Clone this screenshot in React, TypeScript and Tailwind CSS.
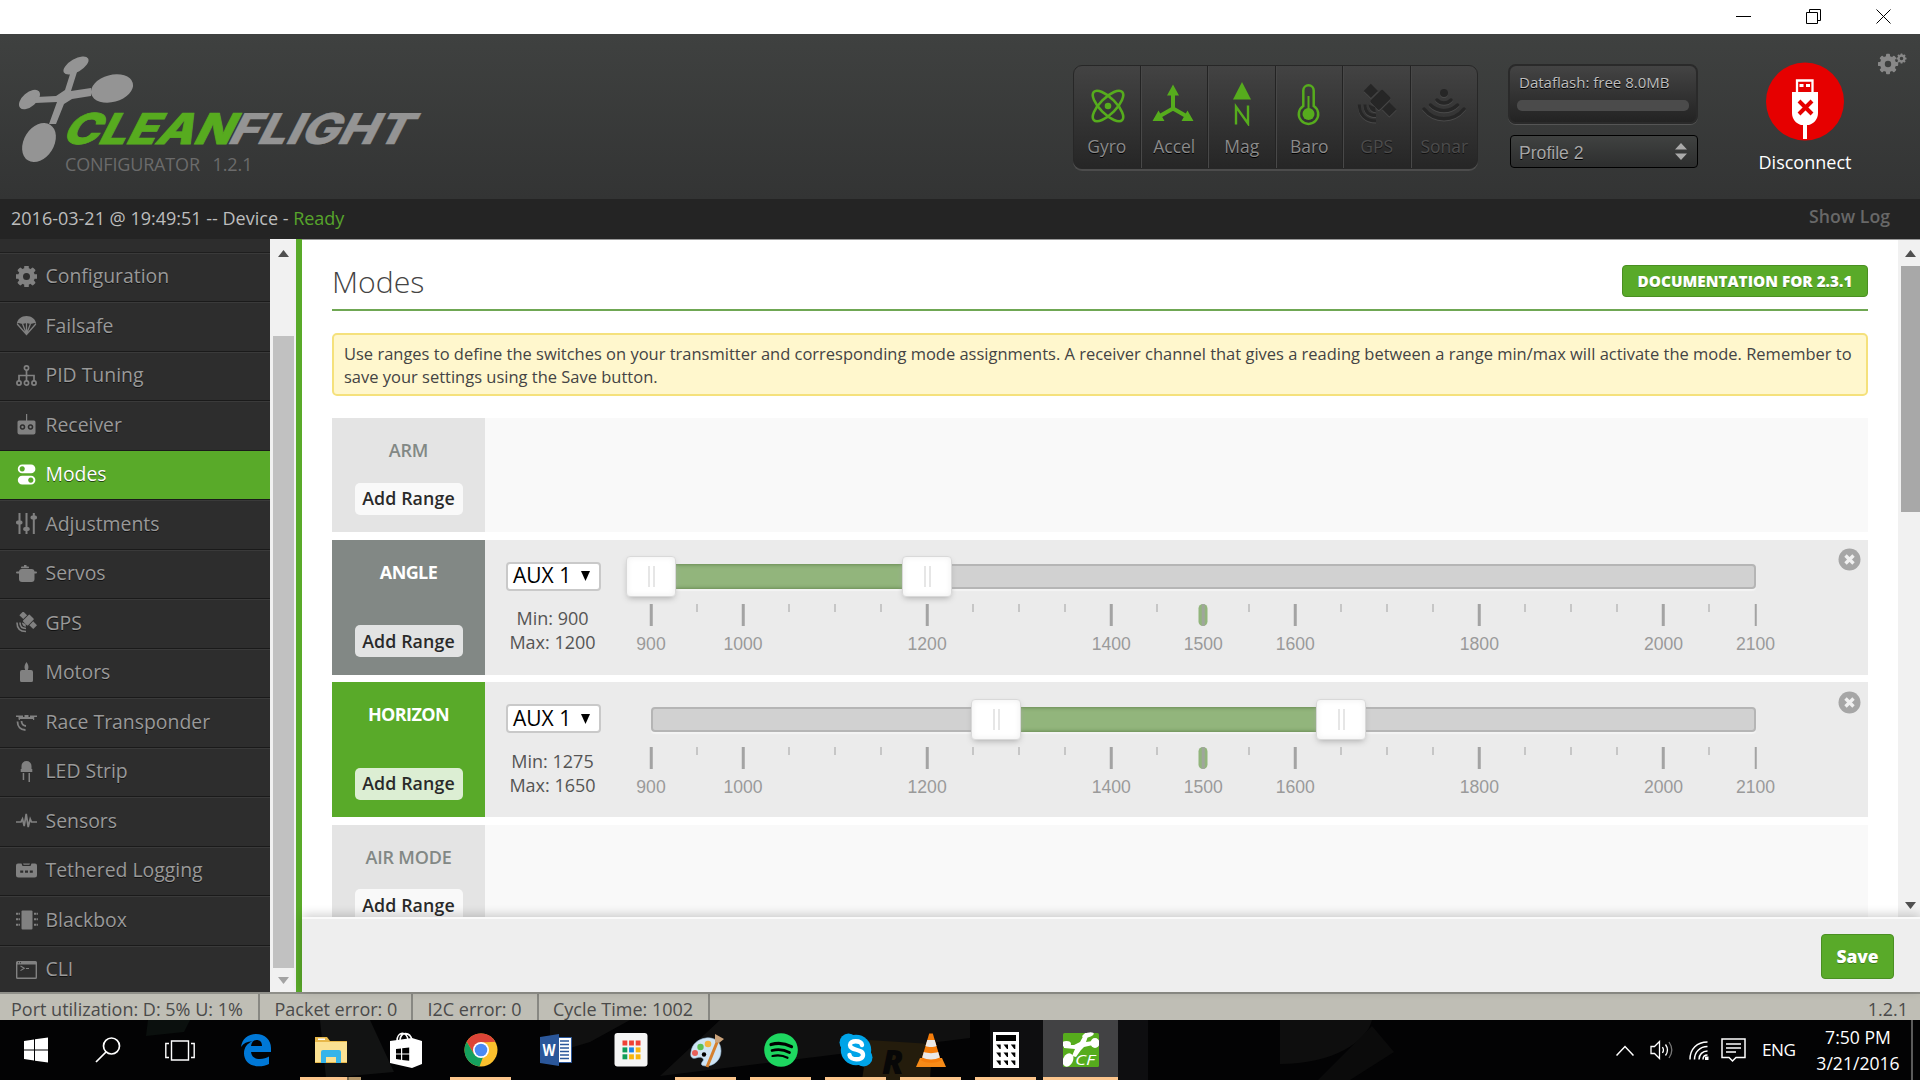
import type { ReactNode } from 'react';
import clsx from 'clsx';

type IconProps = { className?: string };

const Svg = ({ size = 21, className, children }: { size?: number; className?: string; children: ReactNode }) => (
  <svg width={size} height={size} viewBox={`0 0 ${size} ${size}`} className={clsx('shrink-0', className)} fill="currentColor">
    {children}
  </svg>
);

// thick ring with eight teeth rotated around it
const Gear = ({ cx, cy, r, hole, tooth }: { cx: number; cy: number; r: number; hole: number; tooth: number }) => (
  <>
    <circle cx={cx} cy={cy} r={(r + hole) / 2} fill="none" stroke="currentColor" strokeWidth={r - hole} />
    {[0, 45, 90, 135, 180, 225, 270, 315].map(a => (
      <rect key={a} x={cx - tooth / 2} y={cy - r - tooth * 0.55} width={tooth} height={tooth} rx={tooth * 0.25} transform={`rotate(${a} ${cx} ${cy})`} />
    ))}
  </>
);

function Satellite() {
  return (
    <g>
      <g transform="rotate(45 12 8)">
        <rect x="2.5" y="5.3" width="5.5" height="5.4" />
        <rect x="8.8" y="3" width="7" height="9.5" rx="1" />
        <rect x="16.6" y="5.3" width="5.5" height="5.4" />
      </g>
      <path d="M6 10.5a4 4 0 0 0 4 4.200l-.5-2.700Z" />
      <path d="M4 10.5c0 4 2 6 6 6M1 10.5c0 5.5 3.200 9 9 9" fill="none" stroke="currentColor" strokeWidth="1.6" />
    </g>
  );
}

const menu: { label: string; icon: ReactNode }[] = [
  { label: 'Configuration', icon: <Svg><Gear cx={10.5} cy={10.5} r={8.4} hole={3.5} tooth={4.6} /></Svg> },
  {
    label: 'Failsafe',
    icon: (
      <Svg>
        <path d="M.8 9C1.300 4 5.500 1 10.500 1S19.700 4 20.200 9L18.500 8 14.500 9 10.500 8 6.500 9 2.500 8Z" />
        <path d="M1.200 9 10.500 19.500 19.800 9M6.600 9l3.900 10L14.400 9M10.500 8v11" fill="none" stroke="currentColor" strokeWidth="1.3" />
      </Svg>
    ),
  },
  {
    label: 'PID Tuning',
    icon: (
      <Svg>
        <g fill="none" stroke="currentColor" strokeWidth="1.7">
          <circle cx="10.5" cy="3" r="2.1" />
          <circle cx="3" cy="18" r="2.1" />
          <circle cx="10.5" cy="18" r="2.1" />
          <circle cx="18" cy="18" r="2.1" />
          <path d="M10.5 5v11M3 16v-5.500h15V16" />
        </g>
      </Svg>
    ),
  },
  {
    label: 'Receiver',
    icon: (
      <Svg>
        <path fillRule="evenodd" d="M10 0h1.200v6.500h6.800a1.500 1.500 0 0 1 1.500 1.500v10.500a2 2 0 0 1-2 2h-14a2 2 0 0 1-2-2V8A1.500 1.500 0 0 1 3 6.500h7ZM6.500 10.200a2.800 2.800 0 1 0 .01 0ZM14.500 10.200a2.800 2.800 0 1 0 .01 0Z" />
        <circle cx="6.5" cy="13" r="1.2" />
        <circle cx="14.5" cy="13" r="1.2" />
      </Svg>
    ),
  },
  {
    label: 'Modes',
    icon: (
      <Svg>
        <path fillRule="evenodd" d="M6.200.5h8.800a4.300 4.300 0 0 1 0 8.800H6.200a4.300 4.300 0 0 1 0-8.800ZM6.200 2.300a2.600 2.600 0 1 0 .01 0Z" />
        <path fillRule="evenodd" d="M6.200 11.700h8.800a4.300 4.300 0 0 1 0 8.800H6.200a4.300 4.300 0 0 1 0-8.800ZM14.800 13.500a2.600 2.600 0 1 0 .01 0Z" />
      </Svg>
    ),
  },
  {
    label: 'Adjustments',
    icon: (
      <Svg>
        <path d="M2.500 0h2v21h-2zM9.500 0h2v21h-2zM16.800 0h2v21h-2z" />
        <rect x="0" y="7.5" width="6.5" height="4" rx="1.8" />
        <rect x="7.2" y="14" width="6.5" height="4" rx="1.8" />
        <rect x="14.5" y="2.5" width="6.5" height="4" rx="1.8" />
      </Svg>
    ),
  },
  {
    label: 'Servos',
    icon: (
      <Svg>
        <rect x="8" y="2" width="2.5" height="3" />
        <rect x="5" y="3.5" width="8" height="1.8" rx=".8" />
        <rect x="0" y="8.5" width="21" height="2" rx="1" />
        <rect x="3" y="6" width="15.5" height="13" rx="3" />
      </Svg>
    ),
  },
  { label: 'GPS', icon: <Svg><Satellite /></Svg> },
  {
    label: 'Motors',
    icon: (
      <Svg>
        <path d="M10.500 0c2 3 2.600 5 1.300 8H15a2 2 0 0 1 2 2v8.500a1.500 1.500 0 0 1-1.500 1.500h-10A1.500 1.500 0 0 1 4 18.500V10a2 2 0 0 1 2-2h3.200C7.900 5 8.500 3 10.500 0Z" />
      </Svg>
    ),
  },
  {
    label: 'Race Transponder',
    icon: (
      <Svg>
        <path d="M0 4.500h7V6H0zM14 4.500h7V6h-7zM2.500 6h15.500v2H2.500zM8.500 4h4v2h-4zM17 6h1.200v3H17zM2.700 6h1.200v3H2.700z" />
        <path d="M1.500 10.500c0 5 3 8.500 8 8.500M5.500 10c.2 3 1.700 4.800 4.500 5" fill="none" stroke="currentColor" strokeWidth="1.8" />
      </Svg>
    ),
  },
  {
    label: 'LED Strip',
    icon: (
      <Svg>
        <path d="M5.500 8V5a5 5 0 0 1 10 0v3h.8v3H4.700V8ZM6.700 12h1.500v7H6.700zM12.500 12H14v9h-1.500z" />
      </Svg>
    ),
  },
  {
    label: 'Sensors',
    icon: (
      <Svg>
        <path d="M0 12h5l1.500-3 1.700 7 2-12 2 13 2-8 1.300 3H21" fill="none" stroke="currentColor" strokeWidth="1.7" />
      </Svg>
    ),
  },
  {
    label: 'Tethered Logging',
    icon: (
      <Svg>
        <path fillRule="evenodd" d="M2 3.500h3.500l1 2.500h8l1-2.500H19a2 2 0 0 1 2 2V15a2.500 2.500 0 0 1-2.500 2.500h-16A2.500 2.500 0 0 1 0 15V5.500a2 2 0 0 1 2-2ZM4.200 10.500v2.300h3v-2.300ZM9 10.500v2.300h3v-2.300ZM13.800 10.500v2.300h3v-2.300Z" />
        <path d="M7 3.500h7l-.7 1.300H7.700Z" />
      </Svg>
    ),
  },
  {
    label: 'Blackbox',
    icon: (
      <Svg size={22}>
        <rect x="5.5" y="1.5" width="11" height="19" rx="1" />
        <path d="M0 4.800h4M0 10.300h4M0 15.700h4M18 4.800h4M18 10.300h4M18 15.700h4" stroke="currentColor" strokeWidth="2" strokeDasharray="2.5 .6 .9" />
      </Svg>
    ),
  },
  {
    label: 'CLI',
    icon: (
      <Svg>
        <path fillRule="evenodd" d="M1.500 2h18A1.500 1.500 0 0 1 21 3.500v15a1.500 1.500 0 0 1-1.500 1.500h-18A1.500 1.500 0 0 1 0 18.500v-15A1.500 1.500 0 0 1 1.500 2ZM1.400 5.500v13h18.200v-13ZM2 3.200v1h1v-1ZM4 3.200v1h1v-1Z" />
        <path d="m4.500 7 3.800 2.300-3.800 2.300M10 9.500h3" fill="none" stroke="currentColor" strokeWidth="1.1" />
      </Svg>
    ),
  },
];

const sensors: { label: string; on: boolean; icon: ReactNode }[] = [
  {
    label: 'Gyro',
    on: true,
    icon: (
      <Svg size={44}>
        <g fill="none" stroke="currentColor" strokeWidth="2.6">
          <ellipse cx="23" cy="24" rx="20" ry="8" transform="rotate(45 23 24)" />
          <ellipse cx="23" cy="24" rx="20" ry="8" transform="rotate(-45 23 24)" />
        </g>
        <circle cx="23" cy="24" r="3.3" />
      </Svg>
    ),
  },
  {
    label: 'Accel',
    on: true,
    icon: (
      <Svg size={44}>
        <path d="M21 26.500V9M21 26.500 7 34.500M21 26.500l14 8" fill="none" stroke="currentColor" strokeWidth="4" />
        <path d="m21 2.500 6 11H15ZM.5 39 6.500 28.500l6 10.500ZM41.500 39 35.500 28.500l-6 10.500Z" />
      </Svg>
    ),
  },
  {
    label: 'Mag',
    on: true,
    icon: (
      <Svg size={44}>
        <path d="m22 0 9 17.500h-18Z" />
        <path d="M16 42.500V24.700L28 41.500V23.500" fill="none" stroke="currentColor" strokeWidth="2.4" />
      </Svg>
    ),
  },
  {
    label: 'Baro',
    on: true,
    icon: (
      <Svg size={44}>
        <path d="M16.300 24V8.500a5.200 5.200 0 0 1 10.400 0V24a9.700 9.700 0 1 1-10.400 0Z" fill="none" stroke="currentColor" strokeWidth="2.5" />
        <circle cx="21.5" cy="32" r="6" />
        <path d="M20.500 14h2v14h-2z" />
      </Svg>
    ),
  },
  {
    label: 'GPS',
    on: false,
    icon: (
      <Svg size={44}>
        <g transform="translate(2.5 3) scale(1.85)">
          <Satellite />
        </g>
      </Svg>
    ),
  },
  {
    label: 'Sonar',
    on: false,
    icon: (
      <Svg size={44}>
        <circle cx="22" cy="11" r="4" />
        <g fill="none" stroke="currentColor" strokeWidth="3.4" strokeLinecap="round">
          <path d="M15 18c4 4 10 4 14 0M8.500 23c7.500 7.500 19.500 7.500 27 0M2 27c10.500 13 29.500 13 40 0" />
        </g>
      </Svg>
    ),
  },
];

const modes = [
  { name: 'ARM', tone: 'off' },
  { name: 'ANGLE', tone: 'idle', min: 900, max: 1200 },
  { name: 'HORIZON', tone: 'on', min: 1275, max: 1650 },
  { name: 'AIR MODE', tone: 'off' },
];

const labelled = [900, 1000, 1200, 1400, 1500, 1600, 1800, 2000, 2100];
const ticks = Array.from({ length: 25 }, (_, i) => 900 + i * 50);
const pct = (v: number) => `${((v - 900) / 1200) * 100}%`;

function Handle({ value }: { value: number }) {
  return (
    <span
      className="absolute -top-2 flex h-[41px] w-[50px] -translate-x-1/2 items-center justify-center gap-[3px] rounded-[4px] border border-[#d9d9d9] bg-white shadow-[0_3px_6px_-2px_#aaa,inset_0_0_6px_#eee]"
      style={{ left: pct(value) }}
    >
      <i className="h-[21px] w-[2px] bg-[#e6e6e6]" />
      <i className="h-[21px] w-[2px] bg-[#e6e6e6]" />
    </span>
  );
}

function RangeSlider({ min, max }: { min: number; max: number }) {
  return (
    <div className="relative ml-[50px] mt-[24.5px] w-[1104.5px]">
      <div className="h-[25px] rounded-[4px] border-2 border-[#b5b5b5] bg-[#d1d1d1] shadow-[0_2px_1px_#f4f4f4]" />
      <div
        className="absolute top-0 h-[25px] bg-[#92b57c] shadow-[inset_0_0_4px_#55763f]"
        style={{ left: pct(min), width: `${((max - min) / 1200) * 100}%` }}
      />
      <Handle value={min} />
      <Handle value={max} />
      <div className="relative mt-[15px] h-[50px] font-['Liberation_Sans',sans-serif] text-[17.6px] leading-none text-[#9a9a9a]">
        <span className="absolute h-[22px] w-[9px] -translate-x-1/2 rounded-[5px] bg-[#92b57c]" style={{ left: pct(1500) }} />
        {ticks.map(t => (
          <span
            key={t}
            className={clsx(
              'absolute -translate-x-1/2',
              labelled.includes(t) ? 'h-[22px] w-[2.5px]' : 'h-[8px] w-[2px] bg-[#c6c6c6]',
              labelled.includes(t) && (t === 1500 ? 'bg-[#a3a3a3]/80' : 'bg-[#a3a3a3]'),
            )}
            style={{ left: pct(t) }}
          />
        ))}
        {labelled.map(t => (
          <span key={t} className="absolute top-[32px] -translate-x-1/2" style={{ left: pct(t) }}>
            {t}
          </span>
        ))}
      </div>
    </div>
  );
}

function ModeRow({ name, tone, min, max }: { name: string; tone: string; min?: number; max?: number }) {
  const hasRange = min !== undefined && max !== undefined;
  return (
    <div className={clsx('flex shrink-0', hasRange ? 'h-[135px] bg-[#ebebeb]' : 'h-[114px] bg-[#f9f9f9]')}>
      <div
        className={clsx(
          'flex w-[153px] shrink-0 flex-col items-center justify-between pb-[17.5px] pt-[19px]',
          tone === 'off' && 'bg-[#e4e4e4] text-[#828885]',
          tone === 'idle' && 'bg-[#828885] text-white',
          tone === 'on' && 'bg-[#59aa29] text-white',
        )}
      >
        <span className={clsx('text-[18px] leading-[26px]', tone === 'off' ? 'font-semibold tracking-[-0.2px]' : 'font-bold tracking-[-0.6px]')}>{name}</span>
        <button
          className={clsx(
            'h-8 w-[108px] rounded-[5px] text-[17.8px] font-semibold tracking-[0.1px] text-[#2a2a2a]',
            tone === 'off' && 'bg-[#f9f9f9]',
            tone === 'idle' && 'bg-[#e2e3e3]',
            tone === 'on' && 'bg-[#dceed3]',
          )}
        >
          Add Range
        </button>
      </div>
      {hasRange && (
        <>
          <div className="ml-[21px] flex w-[95px] shrink-0 flex-col items-center pt-[22px] text-[#555]">
            <div className="flex h-[29px] w-[95px] items-center justify-between rounded-[4px] border-2 border-[#c9c9c9] bg-white pl-[5px] pr-[9px] text-[21px] text-black">
              AUX 1
              <svg width="9" height="10" viewBox="0 0 9 10"><path d="M0 0h9L4.500 10Z" /></svg>
            </div>
            <div className="-ml-[2px] mt-[15.5px] whitespace-nowrap text-center text-[18px] leading-6">
              <div>Min: {min}</div>
              <div>Max: {max}</div>
            </div>
          </div>
          <RangeSlider min={min} max={max} />
          <svg width="23" height="23" viewBox="0 0 23 23" className="ml-auto mr-[7px] mt-[8.5px] shrink-0">
            <circle cx="11.5" cy="11.5" r="11" fill="#a6a6a6" />
            <path d="m7.500 7.500 8 8m0-8-8 8" stroke="#f0f0f0" strokeWidth="3.4" />
          </svg>
        </>
      )}
    </div>
  );
}

function Logo() {
  return (
    <svg width="430" height="165" viewBox="0 34 430 165" className="shrink-0">
      <g fill="#949494">
        <ellipse cx="76" cy="65.5" rx="14" ry="6.5" transform="rotate(-30 76 65.5)" />
        <ellipse cx="112" cy="88.5" rx="21.5" ry="13.5" transform="rotate(-15 112 88.5)" />
        <ellipse cx="29.5" cy="99.5" rx="12.5" ry="7" transform="rotate(-41 29.5 99.5)" />
        <ellipse cx="39" cy="142.5" rx="21" ry="15" transform="rotate(-58 39 142.5)" />
        <path d="m71 71 6 1-6 19 20-3v8l-19 3-8 5-8 20h-7l8-22-22 1 1-6 20-1 9-6Z" />
      </g>
      <g fontFamily="Inter, 'Liberation Sans', sans-serif" fontWeight="800" fontSize="42.5" transform="translate(0 143.5) skewX(-27)">
        <text x="60" y="0" fill="#57ab1f" stroke="#57ab1f" strokeWidth=".8" textLength="169" lengthAdjust="spacingAndGlyphs">CLEAN</text>
        <text x="226" y="0" fill="#949494" stroke="#949494" strokeWidth=".4" textLength="181" lengthAdjust="spacingAndGlyphs">FLIGHT</text>
      </g>
      <text x="65" y="171" fill="#6b6b6b" fontFamily="'Open Sans'" fontSize="18" textLength="135">CONFIGURATOR</text>
      <text x="212.5" y="171" fill="#6b6b6b" fontFamily="'Open Sans'" fontSize="18" textLength="40">1.2.1</text>
    </svg>
  );
}

function Header() {
  return (
    <header className="flex h-[165px] shrink-0 bg-linear-to-b from-[#3f4140] to-[#333434]">
      <Logo />
      <div className="ml-[643px] mt-[31px] flex h-[104px] w-[405px] shrink-0 overflow-hidden rounded-[9px] border border-[#272727] bg-linear-to-b from-[#434343] to-[#262626] shadow-[0_2px_0_#4c4c4c]">
        {sensors.map(s => (
          <div
            key={s.label}
            className={clsx(
              'flex flex-1 flex-col items-center border-l border-r-[1.5px] border-l-[#484848] border-r-[#232323] pt-[16px] first:border-l-0 last:border-r-0',
              s.on ? 'text-[#56ac1d]' : 'text-[#262626]',
            )}
          >
            <span className={clsx('h-11', !s.on && '[filter:drop-shadow(0_1px_0_#4a4a4a)]')}>{s.icon}</span>
            <span className={clsx('mt-[7px] text-[17.5px] leading-[26px]', s.on ? 'text-[#8b8b8b] [text-shadow:0_1px_#000]' : 'text-[#4c4c4c] [text-shadow:0_1px_#111]')}>
              {s.label}
            </span>
          </div>
        ))}
      </div>
      <div className="ml-[30px] mt-[30px] w-[190px] shrink-0">
        <div className="h-[60px] rounded-[8px] border-2 border-[#2a2a2a] bg-linear-to-b from-[#444] to-[#232323] px-[7px] pt-[5px] shadow-[0_1px_0_#555]">
          <div className="whitespace-nowrap pl-[2px] text-[15px] leading-[22px] text-[#bebebe] [text-shadow:0_1px_#000]">Dataflash: free 8.0MB</div>
          <div className="mt-[7px] h-[11px] rounded-[5px] bg-[#4b4b4b]" />
        </div>
        <div className="ml-[2px] mt-[11px] flex h-[33px] items-center justify-between rounded-[4px] border border-black bg-linear-to-b from-[#404241] to-[#2d2e2e] pl-2 pr-[10px] font-['Liberation_Sans',sans-serif] text-[17.6px] text-[#a6a6a6] [text-shadow:0_1px_#000]">
          <span className="mt-[3px]">Profile 2</span>
          <svg width="12" height="17" viewBox="0 0 12 17" fill="#aaa"><path d="m6 0 6 6.500H0ZM6 17l6-6.500H0Z" /></svg>
        </div>
      </div>
      <div className="ml-[57px] mt-[28px] flex w-[100px] shrink-0 flex-col items-center">
        <svg width="78" height="79" viewBox="0 0 78 79">
          <circle cx="39" cy="39.5" r="39" fill="#e60000" />
          <path d="M31 18.500h15.500V32H31z" fill="none" stroke="#fff" strokeWidth="2.3" />
          <path d="M33.500 22h4v3h-4zM40 22h4v3h-4z" fill="#fff" />
          <path d="M26 30h26v21c0 6-4 10.500-9 12h-2v14h-4V63h-2c-5-1.500-9-6-9-12Z" fill="#fff" />
          <path d="m33 39 13 13m0-13L33 52" stroke="#e60000" strokeWidth="4" />
        </svg>
        <span className="mt-[9px] text-[18px] leading-6 text-white">Disconnect</span>
      </div>
      <Svg size={30} className="ml-[23px] mt-[18px] text-[#888]">
        <Gear cx={10} cy={12} r={8} hole={3.2} tooth={4} />
        <Gear cx={23.5} cy={6.5} r={3.9} hole={1.8} tooth={2} />
      </Svg>
    </header>
  );
}

function TitleBar() {
  return (
    <div className="flex h-[34px] shrink-0 items-start justify-end gap-[55px] bg-white pr-[29px] pt-[9px]">
      <svg width="15" height="15" stroke="#000"><path d="M0 7.500h15" /></svg>
      <svg width="15" height="15" stroke="#000" fill="none"><path d="M.5 3.500h11v11H.5zM3.500 3V.5h11v11H12" /></svg>
      <svg width="15" height="15" stroke="#000"><path d="m.5.5 14 14m0-14-14 14" /></svg>
    </div>
  );
}

const ArrowUp = ({ className }: IconProps) => <svg width="11" height="7" viewBox="0 0 11 7" className={className} fill="currentColor"><path d="M5.500 0 11 7H0Z" /></svg>;
const ArrowDown = ({ className }: IconProps) => <svg width="11" height="7" viewBox="0 0 11 7" className={className} fill="currentColor"><path d="M5.500 7 11 0H0Z" /></svg>;

function Sidebar() {
  return (
    <aside className="flex w-[302px] shrink-0 border-r-[6px] border-[#59aa29]">
      <nav className="w-[270px] overflow-hidden bg-[#2d2d2d]">
        <div className="h-[13.5px] border-b border-[#1e1e1e]" />
        {menu.map(m => (
          <div
            key={m.label}
            className={clsx(
              'flex h-[49.5px] items-center gap-[9px] border-b border-t border-b-[#1a1a1a] pl-[16px] text-[19.4px]',
              m.label === 'Modes' ? 'border-t-[#59aa29] bg-[#59aa29] text-white' : 'border-t-[#3a3a3a] text-[#999]',
            )}
          >
            <span className={clsx('-mt-[2px] flex w-[21px] justify-center', m.label !== 'Modes' && 'text-[#818181]')}>{m.icon}</span>
            <span className="-ml-[0.5px] -mt-[3px] whitespace-nowrap [text-shadow:0_1px_rgba(0,0,0,0.6)]">{m.label}</span>
          </div>
        ))}
      </nav>
      <div className="flex w-[26px] flex-col items-center bg-[#f1f1f1]">
        <ArrowUp className="mt-[11px] shrink-0 text-[#505050]" />
        <div className="mt-[79px] h-[632px] w-[21px] bg-[#c1c1c1]" />
        <ArrowDown className="mt-[9px] shrink-0 text-[#a3a3a3]" />
      </div>
    </aside>
  );
}

function Content() {
  return (
    <main className="flex min-w-0 flex-1 flex-col border-t border-[#999] bg-white">
      <div className="flex h-[677px] shrink-0">
        <div className="flex flex-1 flex-col overflow-hidden px-[30px]">
          <div className="flex h-[71px] shrink-0 items-start justify-between border-b-2 border-[#6fa753]">
            <h1 className="mt-[21px] text-[30.2px] font-light leading-[42px] text-[#444]">Modes</h1>
            <button className="mt-[25px] h-[32px] w-[246px] whitespace-nowrap rounded-[4px] border border-[#4a8f22] bg-[#59aa29] text-[15.3px] font-extrabold text-white [text-shadow:0_1px_rgba(0,0,0,0.3)]">
              DOCUMENTATION FOR 2.3.1
            </button>
          </div>
          <div className="mt-[22px] h-[63px] shrink-0 whitespace-nowrap rounded-[5px] border-2 border-[#f5e17c] bg-[#fff7cd] pl-[10px] pt-[7px] text-[16.49px] leading-[23px] text-[#444]">
            Use ranges to define the switches on your transmitter and corresponding mode assignments. A receiver channel that gives a reading between a range min/max will activate the mode. Remember to
            <br />
            save your settings using the Save button.
          </div>
          <div className="mt-[22px] flex flex-col gap-[7.5px]">
            {modes.map(m => <ModeRow key={m.name} {...m} />)}
          </div>
        </div>
        <div className="flex w-[22px] shrink-0 flex-col items-center bg-[#f1f1f1]">
          <ArrowUp className="ml-[3px] mt-[10px] shrink-0 text-[#505050]" />
          <div className="mt-[9px] h-[246px] w-[19px] self-end bg-[#a8a8a8]" />
          <ArrowDown className="mb-[8px] ml-[3px] mt-auto shrink-0 text-[#505050]" />
        </div>
      </div>
      <div className="relative flex flex-1 items-center justify-end border-t-2 border-[#fafafa] bg-[#eee] pr-[26px] pt-[2px] shadow-[0_-2px_10px_rgba(0,0,0,0.2)]">
        <button className="h-[45px] w-[73px] rounded-[4px] border border-[#4a8f22] bg-[#59aa29] text-[17.4px] font-extrabold text-white [text-shadow:0_1px_rgba(0,0,0,0.3)]">Save</button>
      </div>
    </main>
  );
}

function StatusBar() {
  return (
    <footer className="flex h-[28px] shrink-0 overflow-hidden border-t-2 border-[#8f8f89] bg-[#bfbeb5] text-[18px] leading-[31px] text-[#4a4a4a]">
      <div className="w-[260px] shrink-0 whitespace-nowrap border-r-2 border-[#888882] pl-[11px]">Port utilization: D: 5% U: 1%</div>
      <div className="w-[153px] shrink-0 whitespace-nowrap border-r-2 border-[#888882] pl-[14.5px]">Packet error: 0</div>
      <div className="w-[126px] shrink-0 whitespace-nowrap border-r-2 border-[#888882] pl-[14.5px]">I2C error: 0</div>
      <div className="w-[171px] shrink-0 whitespace-nowrap border-r-2 border-[#888882] pl-[14px]">Cycle Time: 1002</div>
      <div className="ml-auto pr-3">1.2.1</div>
    </footer>
  );
}

const apps: { name: string; open?: boolean; active?: boolean; icon: ReactNode }[] = [
  {
    name: 'edge',
    icon: <path fill="#0078d7" d="M3 15C4 7 10 2 18 2c9 0 15 6 15 14v4H13c.5 5 4 7 9 7 3.500 0 6.500-1 9-2.500V32c-3 1.500-6.500 2.300-10 2.300-9 0-15-5-15-13 0-6 3.500-10 8.500-12C9 9.500 5.500 11.500 3 15Zm10-1h11c0-4-2-6-5.500-6-3 0-5 2.500-5.500 6Z" />,
  },
  {
    name: 'explorer',
    open: true,
    icon: (
      <>
        <path fill="#e8b84a" d="M2 5h12l3 4h17v22H2Z" />
        <path fill="#fbe192" d="M2 10h32v20H2z" />
        <path fill="#fff" d="M5 6.500h7V8H5z" />
        <path fill="#35b4ea" d="M8 20q0-2 2-2h16q2 0 2 2v11h-5v-6H13v6H8Z" />
      </>
    ),
  },
  {
    name: 'store',
    icon: (
      <>
        <path fill="#fff" d="m2 9 22-3v30L2 31ZM24 6l10 3v23l-10 4Z" />
        <path fill="none" stroke="#fff" strokeWidth="1.6" d="M9 9c0-10 10-10 11-1M12 8c1-9 10-8 12 0" />
        <path fill="#000" d="m8 17 5-.6v5H8ZM14.200 16.300l7-.8v6h-7ZM8 22.600h5v5.200l-5-.8ZM14.200 22.600h7v6.200l-7-.8Z" />
      </>
    ),
  },
  {
    name: 'chrome',
    open: true,
    icon: (
      <>
        <circle cx="18" cy="18" r="16.5" fill="#fbc02d" />
        <path fill="#dc4437" d="M3.700 9.800A16.500 16.500 0 0 1 32.300 9.800L18 10.500 11 22Z" />
        <path fill="#15a05d" d="M3.700 9.800 11 22l9 3-3.500 9.500A16.500 16.500 0 0 1 3.700 9.800Z" />
        <circle cx="18" cy="18" r="8" fill="#fff" />
        <circle cx="18" cy="18" r="6.3" fill="#4a8af4" />
      </>
    ),
  },
  {
    name: 'word',
    icon: (
      <>
        <path fill="#fff" stroke="#2b579a" strokeWidth="1" d="M20 5.500h13.500v25H20z" />
        <path stroke="#2b579a" strokeWidth="1.6" d="M22 9h9M22 12.500h9M22 16h9M22 19.500h9M22 23h9M22 26.500h9" />
        <path fill="#2b579a" d="m2 5 19-3v32L2 31Z" />
        <text x="4.5" y="24" fontSize="16" fontWeight="700" fill="#fff" textLength="13" lengthAdjust="spacingAndGlyphs">W</text>
      </>
    ),
  },
  {
    name: 'launcher',
    icon: (
      <>
        <rect x="1.5" y="1" width="33" height="33.5" rx="3" fill="#f5f5f5" />
        {['#f04236', '#f04236', '#f04236', '#0e9d58', '#1a84e8', '#f7b50c', '#0e9d58', '#f7b50c', '#f7b50c'].map((c, i) => (
          <rect key={i} x={9.5 + (i % 3) * 6.6} y={8.5 + Math.floor(i / 3) * 6.9} width="4.8" height="5" fill={c} />
        ))}
      </>
    ),
  },
  {
    name: 'paint',
    open: true,
    icon: (
      <>
        <path fill="#cfe4f4" stroke="#9cc0dc" strokeWidth=".6" d="M18 6c9-1 15 4 15 13 0 9-7 15-15 15-6 0-5-3-3-5 2-3-3-5-7-3-4 1-6-1-5-6C4 12 10 7 18 6Z" />
        <circle cx="7" cy="21" r="3" fill="#e8605a" />
        <circle cx="12.5" cy="15" r="3.2" fill="#5cc055" />
        <circle cx="20" cy="12" r="3.3" fill="#f3b63d" />
        <circle cx="16" cy="22.5" r="2.2" fill="#000" />
        <path d="M30 8 19 35" stroke="#d5802e" strokeWidth="3" />
        <path fill="#caa27a" d="m27 2 9 5-5 4-4-1Z" />
      </>
    ),
  },
  {
    name: 'spotify',
    open: true,
    icon: (
      <>
        <circle cx="18" cy="18" r="16.8" fill="#1ed760" />
        <path fill="none" stroke="#000" strokeLinecap="round" strokeWidth="3.2" d="M8 12.500c7-2 14-1.300 20.500 2.200" />
        <path fill="none" stroke="#000" strokeLinecap="round" strokeWidth="2.7" d="M9 18.500c6-1.700 12-1 17.500 2" />
        <path fill="none" stroke="#000" strokeLinecap="round" strokeWidth="2.2" d="M9.500 24c5.500-1.300 10.500-.7 15 1.800" />
      </>
    ),
  },
  {
    name: 'skype',
    open: true,
    icon: (
      <>
        <circle cx="18" cy="18" r="15.2" fill="#00a4e8" />
        <circle cx="10.5" cy="10.5" r="9" fill="#00a4e8" />
        <circle cx="25.5" cy="25.5" r="9" fill="#00a4e8" />
        <path fill="none" stroke="#fff" strokeWidth="4.4" strokeLinecap="round" d="M24 13c-1-5-12-5-12 0 0 6 13 3.500 13 10 0 6-13 5.500-13.500 0" />
      </>
    ),
  },
  {
    name: 'vlc',
    open: true,
    icon: (
      <>
        <path fill="#f78b18" d="M7 26h22l4 9H3Z" />
        <path fill="#f47d0b" d="M16.200 1.500h3.600l8 27c-5 3-14.600 3-19.600 0Z" />
        <path fill="#e9e9e9" d="M14.300 8h7.400l1.800 6c-3 1.300-8 1.300-11 0ZM10.800 20c4 1.500 10.400 1.500 14.400 0l1.600 5.500c-5 2.500-12.600 2.500-17.600 0Z" />
      </>
    ),
  },
  {
    name: 'calculator',
    open: true,
    icon: (
      <>
        <path fill="#fff" d="M5 0h26v36H5z" />
        <path fill="#000" d="M8 3h20v6H8z" />
        {Array.from({ length: 9 }, (_, i) => (
          <path key={i} fill="#000" d="M0 0h4.500v4.500H3.500Z" transform={`translate(${8.2 + (i % 3) * 7.3} ${12.5 + Math.floor(i / 3) * 8})`} />
        ))}
      </>
    ),
  },
  {
    name: 'cleanflight',
    open: true,
    active: true,
    icon: (
      <>
        <rect y="1" width="36" height="34" rx="1.5" fill="#56ac1d" />
        <g fill="#fff">
          <path d="M22 1h4l-3 9 7-1v4l-9 2-3 3-5 7-4-1 3-7-11-1v-3l10 0 6-3Z" />
          <ellipse cx="25" cy="3" rx="6" ry="2.2" transform="rotate(-15 25 3)" />
          <ellipse cx="3.5" cy="12" rx="4.5" ry="3" />
          <ellipse cx="32" cy="11" rx="4.5" ry="5" />
          <ellipse cx="5" cy="28" rx="5" ry="7" transform="rotate(25 5 28)" />
          <text x="12" y="32.5" fontSize="15" fontWeight="500" fontStyle="italic" textLength="20" lengthAdjust="spacingAndGlyphs">CF</text>
        </g>
      </>
    ),
  },
];

function Taskbar() {
  return (
    <div className="relative flex h-[60px] shrink-0 overflow-hidden bg-[#030304] text-white">
      {/* wallpaper showing through the translucent bar */}
      <svg width="1920" height="60" className="absolute left-0 top-0">
        <path fill="#0b100e" d="M148 0h42l-6 12-38 4Z" />
        <path fill="#121313" d="m320 0 50 0 24 52-68 6Z" />
        <path fill="#101010" d="M550 0h80l-40 22-40 12ZM720 0h250v18L660 56Z" />
        <path fill="#241c0c" d="m868 20 64 4-2 36h-68Z" />
        <text x="882" y="54" fontSize="33" fontWeight="800" fontStyle="italic" fill="#070707">R</text>
        <path fill="#0e0e10" d="M990 0h55v60h-55ZM1118 0h30v60h-30Z" />
        <path fill="#0e0e0e" d="M1280 0h92c-5 22-40 44-92 44Z" />
        <path fill="#0b0b0b" d="m1372 6 22 26-44 28h-32Z" />
      </svg>
      <div className="relative flex w-[218px] items-center">
        <span className="flex w-[72px] justify-center">
          <svg width="24" height="26" viewBox="0 0 24 26" fill="#fff"><path d="m0 4 10-1.500v10H0ZM11 2.300 24 .5v12H11ZM0 13.500h10v10L0 22ZM11 13.500h13v12l-13-1.800Z" /></svg>
        </span>
        <span className="flex w-[72px] justify-center">
          <svg width="26" height="26" viewBox="0 0 26 26" fill="none" stroke="#fff" strokeWidth="1.7"><circle cx="16.5" cy="9" r="8" /><path d="M11 15 1 25" /></svg>
        </span>
        <span className="flex w-[72px] justify-center">
          <svg width="30" height="21" viewBox="0 0 30 21" fill="none" stroke="#fff" strokeWidth="1.4"><path d="M6.500 1h17v19h-17zM4 3.500H.8v14H4M26 3.500h3.200v14H26" /></svg>
        </span>
      </div>
      {apps.map(a => (
        <div key={a.name} className={clsx('relative flex w-[75px] flex-col items-center', a.active && 'bg-[#424244]')}>
          <svg width="36" height="36" viewBox="0 0 36 36" className="mt-3" fontFamily="'Open Sans'">{a.icon}</svg>
          {a.open && (
            <span className={clsx('mt-auto flex h-[3px] bg-[#fbc58c]', a.active ? 'w-full' : 'w-[61px]')}>
              {a.name === 'explorer' && <i className="ml-auto w-[14px] border-l-2 border-[#7a6a50] bg-[#b29468]" />}
            </span>
          )}
        </div>
      ))}
      <div className="relative ml-auto flex items-center pr-[7px]">
        <svg width="18" height="11" viewBox="0 0 18 11" fill="none" stroke="#fff" strokeWidth="1.5"><path d="m.5 10.500 8.500-9 8.500 9" /></svg>
        <svg width="23" height="20" viewBox="0 0 23 20" fill="none" stroke="#fff" strokeWidth="1.3" className="ml-4">
          <path d="M1 6.500h3.500l5-5v17l-5-5H1Z" />
          <path d="M12.500 7c1.300 2 1.300 4 0 6M15.500 4.500c2.500 3.500 2.500 7.500 0 11" />
          <path d="M19 2c3.500 5 3.500 11 0 16" stroke="#777" />
        </svg>
        <svg width="20" height="19" viewBox="0 0 20 19" fill="none" stroke="#fff" strokeWidth="1.5" className="ml-4">
          <path d="M1 18.500C1 8 8 1 18.500 1M5.500 18.500C5.500 11 11 5.500 18.500 5.500M10 18.500c0-5 3.500-8.500 8.500-8.500M14 18.500c0-3 2-4.500 4.500-4.500" />
          <path fill="#fff" stroke="none" d="M16 15.500h3.500V19H16z" />
        </svg>
        <svg width="25" height="25" viewBox="0 0 25 25" fill="none" stroke="#fff" strokeWidth="1.5" className="ml-3"><path d="M1 1h23v18.500H15L11.500 23 8 19.500H1ZM5 6h15M5 10h15M5 14h10" /></svg>
        <span className="ml-[16px] w-[35px] text-[17.2px] tracking-[-0.5px]">ENG</span>
        <div className="ml-[17px] w-[88px] whitespace-nowrap text-center text-[17.6px] leading-[26px]">
          <div>7:50 PM</div>
          <div>3/21/2016</div>
        </div>
        <i className="ml-[9px] h-[60px] w-[2px] bg-[#5a5a5a]" />
      </div>
    </div>
  );
}

export default function App() {
  return (
    <div className="flex h-[1080px] w-[1920px] flex-col overflow-hidden bg-white font-['Open_Sans','Noto_Sans',sans-serif]">
      <TitleBar />
      <Header />
      <div className="flex h-10 shrink-0 items-center justify-between bg-[#242424] pb-[2px] pl-[11px] pr-[30px] text-[18px]">
        <div className="text-[#bdbdbd]">
          2016-03-21 @ 19:49:51 -- Device - <span className="text-[#57a52b]">Ready</span>
        </div>
        <div className="-mt-[3px] text-[17.7px] font-semibold text-[#686868]">Show Log</div>
      </div>
      <div className="flex h-[753px] shrink-0">
        <Sidebar />
        <Content />
      </div>
      <StatusBar />
      <Taskbar />
    </div>
  );
}
